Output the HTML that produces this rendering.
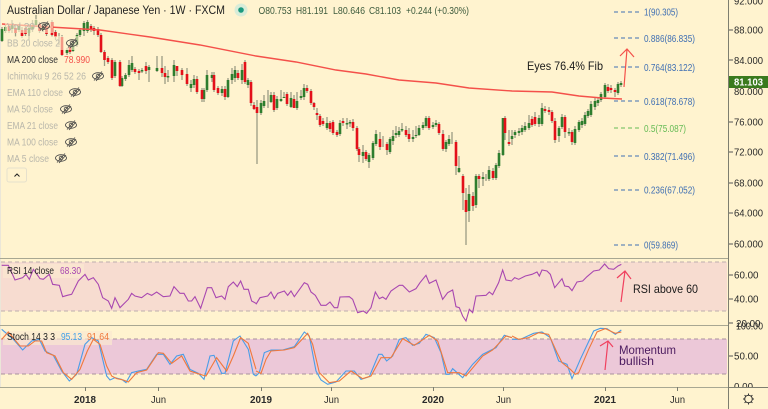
<!DOCTYPE html>
<html><head><meta charset="utf-8"><title>AUD/JPY</title>
<style>
html,body{margin:0;padding:0;background:#fff3cf;width:768px;height:409px;overflow:hidden}
svg{display:block}
text{font-family:"Liberation Sans",sans-serif;font-size:10px;fill:#222}
.l{fill:#b9b7ab}
.ax{font-size:10px;fill:#2a2a2a}
.f{fill:#3f6fb3;font-size:10px}
.t{font-size:10.5px;fill:#2a2a2a}
.b{font-weight:bold}
.e{font-size:12px;fill:#1a1a1a}
.o{font-size:10px;fill:#3c5a3c}
</style></head><body>
<svg width="768" height="409" viewBox="0 0 768 409" xmlns="http://www.w3.org/2000/svg">
<defs>
<g id="eye" fill="none" stroke="#444" stroke-width=".8"><ellipse cx="0" cy="0" rx="5.5" ry="3.3"/><circle cx="0" cy="0" r="1.8"/><path d="M-4 4.500 4 -4.500M-2 5 5 -3"/></g>
</defs>
<rect width="768" height="409" fill="#fff3cf"/>
<rect x="0" width="1" height="387" fill="#ebe6d8"/>
<!-- wicks -->
<path fill="none" stroke="#9c9c84" stroke-width="1.3" d="M2 27V42M5.500 25V33M9 24V33M12 20V33M15.500 24V37M19 24V32M22 27V38M25.500 26V36M29 24V40M32.500 20V32M36 15V27M39.500 22V33M43 25V32M46.500 24V36M52 20V37M55.500 30V40M59 33V45M62 35V56M67 48V55M70 45V54M73 40V52M77 33V47M80 28V37M84 21V36M87.500 20V33M91 24V32M94 26V35M98 27V37M101 33V53M104.500 50V66M108 56V64M112 58V80M115 60V78M120 60V87M122 76V87M125.500 73V81M129 60V77M132 56V72M135 67V74M139 69V80M142 68V73M146 62V74M149 65V82M157 56V72M162 56V77M165 66V84M168 70V82M174 60V82M177 68V76M182 68V80M187 68V86M191 80V92M194 75V88M197 76V94M202 88V102M204 88V102M207 70V92M212 72V82M214 72V92M218 86V95M222 86V96M225 86V100M228 78V98M232 68V84M235 66V82M238 70V80M242 64V84M245 60V84M248 78V88M251 80V106M254 102V110M257 100V164M261 100V115M264 95V108M268 90V108M271 92V103M274 92V112M277 96V110M281 90V102M284 92V97M287 92V106M291 92V108M294 95V108M297 92V110M301 90V100M304 84V100M307 85V93M311 89V105M314 102V110M317 108V120M320 114V127M323 118V126M327 117V130M330 121V132M333 120V135M337 130V137M340 120V136M343 118V126M347 118V129M350 120V127M353 119V131M357 126V151M359 147V162M363 145V163M366 150V161M369 153V168M373 141V160M376 130V146M380 132V150M383 136V147M387 142V155M390 137V154M393 130V145M396 126V138M399 127V137M402 123V132M406 126V137M409 128V142M413 130V142M416 126V138M419 125V136M423 122V130M426 116V128M429 116V130M433 122V129M436 120V127M439 122V135M443 130V151M446 140V152M449 135V146M452 132V144M456 140V175M459 156V173M463 174V210M466 188V245M469 185V222M473 192V211M476 174V208M479 174V188M483 172V186M486 174V181M489 166V181M493 168V180M496 163V180M499 150V168M503 118V156M505 116V140M509 130V146M512 130V145M515 130V138M519 128V136M522 125V135M525 122V132M529 115V130M532 116V127M535 112V126M539 115V127M542 103V126M545 106V113M549 107V115M552 110V123M555 118V143M559 126V142M562 114V129M565 115V138M569 128V136M572 130V145M575 126V145M579 120V132M582 118V128M585 112V126M588 109V118M591 101V117M595 98V110M598 97V106M601 92V102M605 83V99M608 84V93M611 85V93M615 88V97M618 82V95M621 81V87"/>
<!-- green bodies -->
<path fill="none" stroke="#2e7d2e" stroke-width="2.6" d="M2 29V41M5.500 27V31M12 24V29M19 26V30M29 28V33M32.500 25V29M36 20V25M43 27V30M67 50V53M73 43V51M77 35V45M80 30V35M84 23V31M87.500 22V31M115 62V76M122 78V86M125.500 75V79M129 65V75M132 63V70M142 70V71.500M149 67V70M157 68V71M168 76V77.500M174 65V76M191 84V88M194 79V85M204 90V99M207 75V90M212 75V78M222 89V93M228 80V97M232 74V80M235 70V78M242 70V80M248 80V85M261 103V113M264 101V106M271 95V102M277 99V108M281 99V101M284 97V98M291 98V107M297 101V108M301 96V98M304 88V97M327 123V128M340 123V134M347 123V124.500M350 122V123.500M363 152V156M369 155V162M373 143V158M376 134V144M390 139V152M393 136V141M396 133V135M399 131V135M402 129V130.500M413 137V139M416 135V136M419 128V135M423 125V128M426 118V126M433 125V127M436 123V125M446 142V149M449 139V144M459 168V172M469 194V211M476 176V205M483 177V179M489 170V179M496 165V178M499 153V166M503 118V155M512 136V139M515 132V135M519 131V133M522 128V132M525 126V130M529 123V128M539 118V124M542 108V124M559 128V136M562 117V127M569 132V133.500M575 129V143M579 122V130M582 121V125M585 115V124M588 111V116M591 104V115M595 101V107M598 100V103M601 94V100M605 85V97M618 84V93M621 83V85"/>
<!-- red bodies -->
<path fill="none" stroke="#e3101a" stroke-width="2.6" d="M9 26V31M15.500 28V33M22 30V36M25.500 28V34M39.500 24V31M46.500 26V34M52 22V35M55.500 32V37M62 37V55M70 47V52M91 26V30M94 28V31M98 29V35M101 35V52M104.500 52V60M108 58V62M112 60V78M120 62V86M135 69V72M139 71V73M146 66V71M162 68V73M165 73V77M177 66V71M182 70V75M187 74V84M197 79V92M202 90V99M214 75V90M218 88V93M225 89V97M238 73V78M245 62V82M251 82V103M254 105V109M257 107V113M274 95V110M287 94V104M294 99V108M307 88V91M311 91V103M314 103V107M317 113V115M320 116V125M323 121V124M330 123V129M333 122V133M337 132V135M343 121V123M353 122V128M357 128V149M359 149V155M366 152V159M380 139V147M387 144V150M406 130V135M409 134V139M429 118V128M439 124V133M443 134V149M456 142V166M463 176V193M466 200V212M473 196V206M479 176V179M493 171V178M505 118V133M509 142V144M532 119V125M535 117V124M545 109V111M549 110V112M552 112V121M555 121V140M565 117V132M572 132V142M608 87V91M611 88V90M615 90V92"/>
<!-- MA 200 -->
<path fill="none" stroke="#f4504a" stroke-width="1.4" d="M2 24 50 27 100 30 150 37 200 45 256 56 296 62 336 70 366 74 399 80 436 83 469 88 512 91 552 92 579 96 602 98 622 99"/>
<!-- legend wash over candles -->
<rect x="5" y="19" width="48" height="14" fill="#fff3cf" opacity=".6"/>
<rect x="5" y="36" width="74" height="14" fill="#fff3cf" opacity=".6"/>
<!-- header -->
<text x="7" y="14" style="font-size:11.5px" textLength="218" lengthAdjust="spacingAndGlyphs">Australian Dollar / Japanese Yen · 1W · FXCM</text>
<circle cx="241" cy="10" r="6.5" fill="#d8ecd8"/><circle cx="241" cy="10" r="2.8" fill="#1b9a80"/>
<text class="o" x="258.500" y="14" textLength="33" lengthAdjust="spacingAndGlyphs">O80.753</text>
<text class="o" x="296" y="14" textLength="32" lengthAdjust="spacingAndGlyphs">H81.191</text>
<text class="o" x="333" y="14" textLength="32" lengthAdjust="spacingAndGlyphs">L80.646</text>
<text class="o" x="369" y="14" textLength="32" lengthAdjust="spacingAndGlyphs">C81.103</text>
<text class="o" x="406" y="14" textLength="63" lengthAdjust="spacingAndGlyphs">+0.244 (+0.30%)</text>
<text class="l" x="7" y="30" textLength="28" lengthAdjust="spacingAndGlyphs">Vol 20</text><use href="#eye" x="44" y="26"/>
<text class="l" x="7" y="46.500" textLength="53" lengthAdjust="spacingAndGlyphs">BB 20 close 2</text><use href="#eye" x="72" y="43"/>
<text x="7" y="63" style="fill:#333" textLength="51" lengthAdjust="spacingAndGlyphs">MA 200 close</text><text x="64" y="63" style="fill:#f4504a" textLength="26" lengthAdjust="spacingAndGlyphs">78.990</text>
<text class="l" x="7" y="79.500" textLength="79" lengthAdjust="spacingAndGlyphs">Ichimoku 9 26 52 26</text><use href="#eye" x="98" y="76"/>
<text class="l" x="7" y="96" textLength="56" lengthAdjust="spacingAndGlyphs">EMA 110 close</text><use href="#eye" x="75" y="92"/>
<text class="l" x="7" y="112.500" textLength="46" lengthAdjust="spacingAndGlyphs">MA 50 close</text><use href="#eye" x="66" y="109"/>
<text class="l" x="7" y="129" textLength="51" lengthAdjust="spacingAndGlyphs">EMA 21 close</text><use href="#eye" x="71" y="125"/>
<text class="l" x="7" y="145.500" textLength="51" lengthAdjust="spacingAndGlyphs">MA 100 close</text><use href="#eye" x="71" y="142"/>
<text class="l" x="7" y="162" textLength="42" lengthAdjust="spacingAndGlyphs">MA 5 close</text><use href="#eye" x="61" y="158"/>
<rect x="7" y="168" width="19.500" height="14" rx="2" fill="#fff3cf" stroke="#e6e0cc"/>
<path d="M14.500 176.500 17 174 19.500 176.500" fill="none" stroke="#222" stroke-width="1"/>
<!-- fibs -->
<g fill="none" stroke-width="1" stroke-dasharray="4 3">
<path stroke="#3f6fb3" d="M614 12H641M614 38H641M614 67H641M614 101H641M614 156H641M614 190H641M614 245H641"/>
<path stroke="#66bb55" d="M614 128H641"/></g>
<text class="f" x="644" y="15.500" textLength="34" lengthAdjust="spacingAndGlyphs">1(90.305)</text>
<text class="f" x="644" y="42" textLength="51" lengthAdjust="spacingAndGlyphs">0.886(86.835)</text>
<text class="f" x="644" y="71" textLength="51" lengthAdjust="spacingAndGlyphs">0.764(83.122)</text>
<text class="f" x="644" y="105" textLength="51" lengthAdjust="spacingAndGlyphs">0.618(78.678)</text>
<text class="f" x="644" y="132" style="fill:#66bb55" textLength="42" lengthAdjust="spacingAndGlyphs">0.5(75.087)</text>
<text class="f" x="644" y="160" textLength="51" lengthAdjust="spacingAndGlyphs">0.382(71.496)</text>
<text class="f" x="644" y="193.500" textLength="51" lengthAdjust="spacingAndGlyphs">0.236(67.052)</text>
<text class="f" x="644" y="248.500" textLength="34" lengthAdjust="spacingAndGlyphs">0(59.869)</text>
<text class="e" x="527" y="70" textLength="76" lengthAdjust="spacingAndGlyphs">Eyes 76.4% Fib</text>
<path d="M624 87 627 49M620 56 627 49 634 57" fill="none" stroke="#f4504a" stroke-width="1.2"/>
<!-- separators -->
<path d="M0 258.500H728M0 325.500H728M0 387.500H728" stroke="#a8a792" stroke-width="1"/>
<!-- RSI -->
<rect x="1" y="262" width="726" height="49" fill="#f7dcd0"/>
<path d="M1 262H727M1 311H727" stroke="#bcaeae" stroke-dasharray="4 3"/>
<rect x="3" y="264" width="81" height="14" fill="#fbe8d0" opacity=".75"/>
<g fill="none" stroke="#a847b0" stroke-width="3.300">
<path transform="translate(0,256) scale(.3333)" d="M5 28 25 28 45 72 68 65 78 55 88 70 100 40 120 68 130 70 148 55 158 85 178 88 188 122 202 118 215 115 235 75 255 55 265 72 280 65 295 85 308 125 325 135 335 157 345 125 360 155 385 130 395 112 405 120 425 125 442 112 455 118 470 108 490 122 510 120 522 92 540 112 552 112 565 135 575 135 585 122 602 157 622 95 635 95 648 125 665 120 675 130 685 92 700 78 712 92 722 75 732 100 745 100 755 135 768 142"/>
<path transform="translate(256,256) scale(.3333)" d="M0 145 12 125 35 120 45 108 55 128 65 112 85 105 95 118 105 105 115 122 145 80 155 85 165 108 178 118 195 148 210 148 222 138 235 155 245 155 252 123 280 122 290 130 305 170 322 165 332 172 345 155 358 108 370 128 380 123 390 130 405 105 415 98 430 88 440 88 460 108 480 98 492 80 510 58 520 82 540 72 560 130 575 110 590 102 600 152 610 155 620 180 630 195 640 160 650 170 660 120 690 118 700 108 710 116 728 80 740 42 750 72 768 75"/>
<path transform="translate(512,256) scale(.3333)" d="M0 73 8 65 20 70 40 60 60 55 75 48 82 60 90 42 105 45 115 55 128 95 150 68 158 90 170 92 180 104 195 78 212 75 225 62 245 45 262 42 278 24 290 38 305 40 318 30 328 25"/>
</g>
<text x="7" y="274" textLength="47" lengthAdjust="spacingAndGlyphs">RSI 14 close</text><text x="60" y="274" style="fill:#a847b0" textLength="21" lengthAdjust="spacingAndGlyphs">68.30</text>
<text class="e" x="633" y="293" textLength="65" lengthAdjust="spacingAndGlyphs">RSI above 60</text>
<path d="M621 302 625 271M617 278 625 271 631 279" fill="none" stroke="#f0405e" stroke-width="1.2"/>
<!-- Stoch -->
<rect x="1" y="339" width="726" height="35" fill="#ecc8d8"/>
<path d="M1 339H727M1 374H727" stroke="#a8929c" stroke-dasharray="4 3"/>
<rect x="3" y="331" width="109" height="14" fill="#fbe8d0" opacity=".7"/>
<g fill="none" stroke-width="3.300">
<g stroke="#4a9de8">
<path transform="translate(0,256) scale(.3333)" d="M5 220 40 250 68 282 95 255 118 250 135 285 160 298 185 345 208 375 230 355 255 265 275 245 295 255 320 360 330 372 345 365 365 370 378 380 395 350 415 345 440 340 470 295 490 295 510 325 530 300 550 295 570 340 595 352 612 370 630 300 642 298 665 352 675 352 700 255 720 240 745 280 760 355 768 360"/>
<path transform="translate(256,256) scale(.3333)" d="M0 360 10 350 25 290 45 282 80 282 115 272 145 228 160 240 180 345 195 372 215 385 240 378 270 345 295 345 315 370 340 362 368 295 378 295 392 315 410 300 430 250 450 245 470 268 490 262 510 235 535 245 555 290 570 355 580 355 590 338 620 365 650 325 680 295 720 275 745 238 768 245"/>
<path transform="translate(512,256) scale(.3333)" d="M0 250 25 250 65 232 90 228 115 245 140 315 165 325 180 368 205 310 245 225 265 217 285 218 310 235 328 222"/>
</g>
<g stroke="#f0783c">
<path transform="translate(0,256) scale(.3333)" d="M5 250 25 228 60 270 85 270 105 255 125 255 140 290 165 300 190 350 215 370 240 340 262 285 280 250 300 265 320 330 335 360 350 368 370 372 385 378 410 350 440 342 475 290 490 292 515 322 545 300 570 345 600 355 618 360 650 305 680 345 700 300 722 245 745 262 768 340"/>
<path transform="translate(256,256) scale(.3333)" d="M0 345 15 352 30 310 45 285 85 282 115 275 155 232 170 265 190 350 220 380 250 375 285 345 320 368 345 360 375 305 405 305 440 248 475 268 520 238 545 255 575 350 610 350 630 360 680 300 710 282 750 240 768 245"/>
<path transform="translate(512,256) scale(.3333)" d="M0 240 20 250 50 245 80 230 110 235 135 290 150 320 175 340 190 355 200 350 230 280 255 228 280 218 310 232 328 228"/>
</g></g>
<text x="7" y="340" textLength="48" lengthAdjust="spacingAndGlyphs">Stoch 14 3 3</text>
<text x="61" y="340" style="fill:#3f9fe8" textLength="21" lengthAdjust="spacingAndGlyphs">95.13</text>
<text x="87" y="340" style="fill:#f0783c" textLength="22" lengthAdjust="spacingAndGlyphs">91.64</text>
<text x="619" y="354" style="font-size:12px;fill:#4a1a5e" textLength="57" lengthAdjust="spacingAndGlyphs">Momentum</text>
<text x="619" y="365" style="font-size:12px;fill:#4a1a5e" textLength="35" lengthAdjust="spacingAndGlyphs">bullish</text>
<path d="M605 370 608 341M600 346 608 341 613 347" fill="none" stroke="#f0405e" stroke-width="1.2"/>
<!-- price axis -->
<rect x="729" y="0" width="39" height="409" fill="#fff3cf"/>
<path d="M728.500 0V409" stroke="#7e7e70" stroke-width="1"/>
<path stroke="#555" d="M729 30H733M729 60H733M729 122H733M729 152H733M729 183H733M729 213H733M729 244H733M729 275H733M729 299H733M729 323H733M729 356H733"/>
<text class="ax" x="734" y="4.500" textLength="29" lengthAdjust="spacingAndGlyphs">92.000</text>
<text class="ax" x="734" y="33.500" textLength="29" lengthAdjust="spacingAndGlyphs">88.000</text>
<text class="ax" x="734" y="64" textLength="29" lengthAdjust="spacingAndGlyphs">84.000</text>
<text class="ax" x="734" y="95" textLength="29" lengthAdjust="spacingAndGlyphs">80.000</text>
<text class="ax" x="734" y="125.500" textLength="29" lengthAdjust="spacingAndGlyphs">76.000</text>
<text class="ax" x="734" y="155.500" textLength="29" lengthAdjust="spacingAndGlyphs">72.000</text>
<text class="ax" x="734" y="186.500" textLength="29" lengthAdjust="spacingAndGlyphs">68.000</text>
<text class="ax" x="734" y="216.500" textLength="29" lengthAdjust="spacingAndGlyphs">64.000</text>
<text class="ax" x="734" y="247.500" textLength="29" lengthAdjust="spacingAndGlyphs">60.000</text>
<rect x="729" y="76" width="39" height="12" fill="#3a7a1e"/>
<text x="734" y="85.500" style="font-size:10px;fill:#fff;font-weight:bold" textLength="29" lengthAdjust="spacingAndGlyphs">81.103</text>
<text class="ax" x="734" y="278.500" textLength="24.500" lengthAdjust="spacingAndGlyphs">60.00</text>
<text class="ax" x="734" y="302.500" textLength="24.500" lengthAdjust="spacingAndGlyphs">40.00</text>
<text class="ax" x="736" y="327" textLength="24.500" lengthAdjust="spacingAndGlyphs">20.00</text>
<text class="ax" x="736" y="329.500" textLength="27" lengthAdjust="spacingAndGlyphs">100.00</text>
<text class="ax" x="734" y="359.500" textLength="24.500" lengthAdjust="spacingAndGlyphs">50.00</text>
<text class="ax" x="734" y="390" textLength="19" lengthAdjust="spacingAndGlyphs">0.00</text>
<path d="M729 387.500H768" stroke="#7e7e70"/>
<rect x="729" y="388" width="39" height="21" fill="#fff3cf"/>
<!-- time axis -->
<path stroke="#7e7e70" d="M85.500 387V391M158.500 387V391M261.500 387V391M331.500 387V391M433.500 387V391M503.500 387V391M605.500 387V391M677.500 387V391"/>
<text class="t b" x="74" y="403" textLength="22" lengthAdjust="spacingAndGlyphs">2018</text>
<text class="t" x="151" y="403" textLength="15" lengthAdjust="spacingAndGlyphs">Jun</text>
<text class="t b" x="250" y="403" textLength="22" lengthAdjust="spacingAndGlyphs">2019</text>
<text class="t" x="324" y="403" textLength="15" lengthAdjust="spacingAndGlyphs">Jun</text>
<text class="t b" x="422" y="403" textLength="22" lengthAdjust="spacingAndGlyphs">2020</text>
<text class="t" x="496" y="403" textLength="15" lengthAdjust="spacingAndGlyphs">Jun</text>
<text class="t b" x="594" y="403" textLength="22" lengthAdjust="spacingAndGlyphs">2021</text>
<text class="t" x="670" y="403" textLength="15" lengthAdjust="spacingAndGlyphs">Jun</text>
<g fill="none" stroke="#333" stroke-width="1"><circle cx="748.500" cy="399" r="3.800"/><path d="M748.500 393.500V395M748.500 403V404.500M743 399H744.500M752.500 399H754M744.600 395.100 745.700 396.200M751.300 401.800 752.400 402.900M744.600 402.900 745.700 401.800M751.300 396.200 752.400 395.100"/></g>
</svg>
</body></html>
